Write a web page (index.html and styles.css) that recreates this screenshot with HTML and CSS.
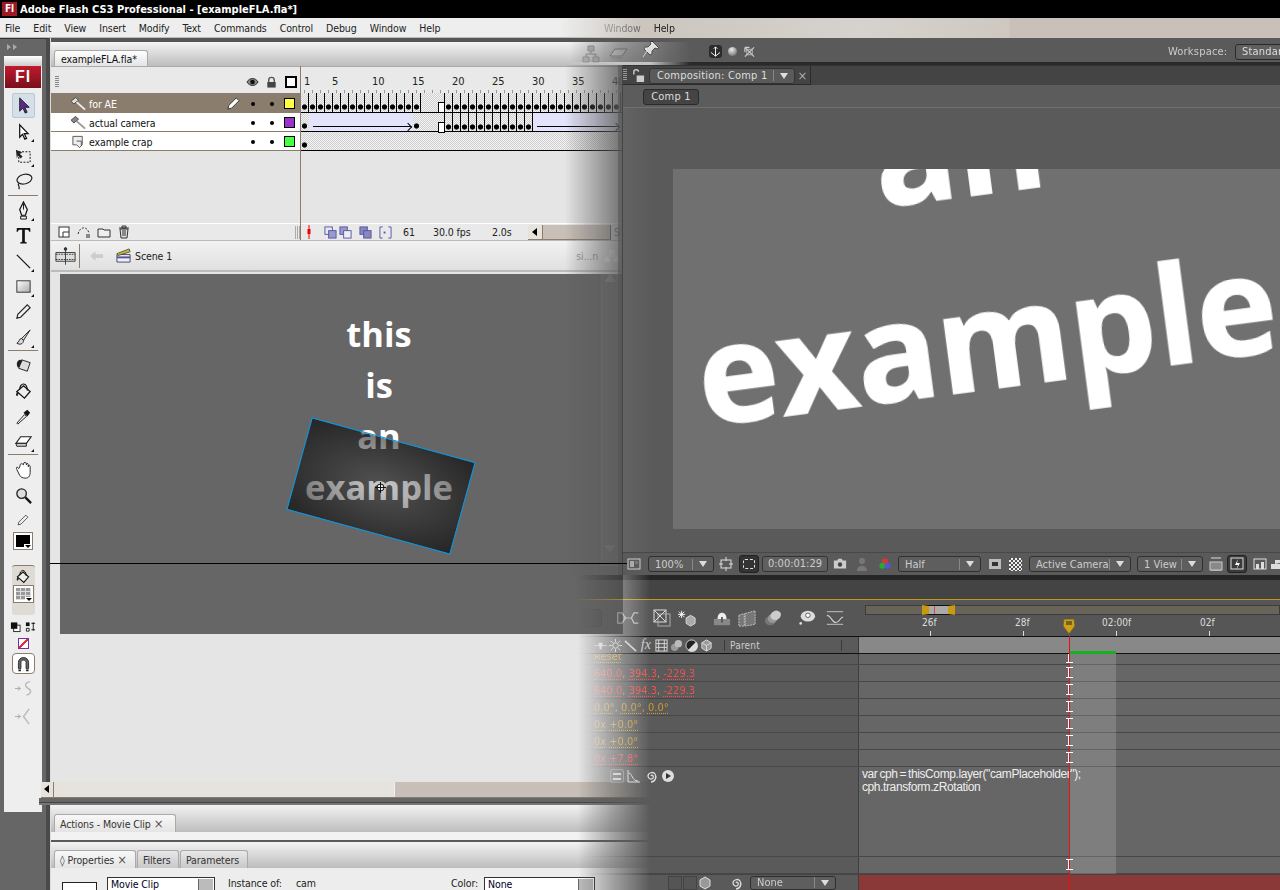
FILE: index.html
```html
<!DOCTYPE html>
<html lang="en">
<head>
    <meta charset="UTF-8">
    <title>Flash and After Effects</title>
    <link rel="stylesheet" href="styles.css">
</head>
<body>
<div class="screen">

    <!-- title bar -->
    <div class="titlebar">
        <span class="app-icon">Fl</span>
        <span class="title-text">Adobe Flash CS3 Professional - [exampleFLA.fla*]</span>
    </div>

    <!-- flash menu -->
    <div class="menubar">
        <span>File</span><span>Edit</span><span>View</span><span>Insert</span><span>Modify</span><span>Text</span><span>Commands</span><span>Control</span><span>Debug</span><span>Window</span><span>Help</span>
    </div>

    <div class="flash">
        <!-- tools column -->
        <div class="toolbox">
            <div class="toolbox-grip">
                <svg class="ic-grip" viewBox="0 0 12 8"><path d="M1 1l4 3-4 3zM7 1l4 3-4 3z" fill="#aaa"/></svg>
            </div>
            <div class="toolbox-inner">
                <div class="toolbox-cap"></div>
                <div class="fl-logo">Fl</div>
                <div class="tool tool-on"><svg viewBox="0 0 20 20"><path d="M6 2v14l3.4-3.3 2.4 5.3 2-.9-2.4-5.2H16z" fill="#5b2a86" stroke="#222"/></svg></div>
                <div class="tool"><svg viewBox="0 0 20 20"><path d="M6 3v13l3-3 2.4 5 1.8-.8-2.4-5h4z" fill="#fff" stroke="#111" stroke-width="1.3"/></svg><i class="corner"></i></div>
                <div class="tool"><svg viewBox="0 0 20 20"><rect x="5" y="5" width="12" height="11" fill="none" stroke="#111" stroke-dasharray="2 1.5"/><path d="M2 3l7 3-3 1 3 3-2 2-3-3-1 3z" fill="#222"/></svg><i class="corner"></i></div>
                <div class="tool"><svg viewBox="0 0 20 20"><ellipse cx="11" cy="7.5" rx="8" ry="5" fill="none" stroke="#222" stroke-width="1.3" transform="rotate(-14 11 7.5)"/><path d="M5 12c-2 2 2 3 0 6" fill="none" stroke="#222" stroke-width="1.3"/></svg></div>
                <div class="tool-sep"></div>
                <div class="tool"><svg viewBox="0 0 20 20"><path d="M10 1l4 8-2 6H8L6 9z" fill="#eee" stroke="#111" stroke-width="1.3"/><path d="M10 3v6M7 16h6v3H7z" fill="none" stroke="#111"/></svg><i class="corner"></i></div>
                <div class="tool"><svg viewBox="0 0 20 20"><path d="M3 2h14l.3 4H16c-.4-1.6-1-2-3-2h-1.6v12c0 .8.6 1 2 1v1.3H6.6V17c1.4 0 2-.2 2-1V4H7C5 4 4.4 4.4 4 6H2.7z" fill="#111"/></svg></div>
                <div class="tool"><svg viewBox="0 0 20 20"><path d="M3 3l14 14" stroke="#111" stroke-width="1.3"/></svg><i class="corner"></i></div>
                <div class="tool"><svg viewBox="0 0 20 20"><defs><linearGradient id="rectFill" x1="0" y1="0" x2="1" y2="1"><stop offset="0" stop-color="#fff"/><stop offset="1" stop-color="#aaa"/></linearGradient></defs><rect x="3" y="4" width="14" height="12" fill="url(#rectFill)" stroke="#333"/></svg><i class="corner"></i></div>
                <div class="tool"><svg viewBox="0 0 20 20"><path d="M14 3l3 3L7 16l-4 1 1-4z" fill="#eee" stroke="#222" stroke-width="1.2"/></svg></div>
                <div class="tool"><svg viewBox="0 0 20 20"><path d="M17 2L8 11l2 2zM8 11c-3 0-2 4-5 5 3 2 7 1 7-3z" fill="#ddd" stroke="#222"/></svg><i class="corner"></i></div>
                <div class="tool-sep"></div>
                <div class="tool"><svg viewBox="0 0 20 20"><path d="M8 4l9 3-3 9-9-3z" fill="#ddd" stroke="#222"/><path d="M4 12c-2-3-1-7 2-8l3 1-4 7z" fill="#222"/></svg></div>
                <div class="tool"><svg viewBox="0 0 20 20"><path d="M10 5l7 6-6 7-8-7z" fill="#eee" stroke="#111" stroke-width="1.3"/><path d="M6 9c0-8 8-8 8 1" fill="none" stroke="#111" stroke-width="1.2"/><path d="M3 11l-1 4 1.5 1 1.5-3" fill="#222"/></svg></div>
                <div class="tool"><svg viewBox="0 0 20 20"><path d="M3 17l8-9 2 2-9 8z" fill="#eee" stroke="#222"/><path d="M10 6l4-3 3 3-3 4z" fill="#111"/></svg></div>
                <div class="tool"><svg viewBox="0 0 20 20"><path d="M7 5h11l-5 7H2z" fill="#fff" stroke="#222" stroke-width="1.2"/><path d="M2 12h11v3H3z" fill="#ccc" stroke="#222"/></svg><i class="corner"></i></div>
                <div class="tool-sep"></div>
                <div class="tool"><svg viewBox="0 0 20 20"><path d="M5 8c-2-3-3-1-2 1l3 6c1 2 3 3 6 3 4 0 5-3 5-6V6c0-2-2-2-2 0V4c0-2-2-2-2 0V3c0-2-3-2-3 0V4C8 2 6 3 6.5 5z" fill="#fff" stroke="#222"/></svg></div>
                <div class="tool"><svg viewBox="0 0 20 20"><circle cx="8" cy="8" r="5" fill="#ddd" stroke="#222" stroke-width="1.4"/><path d="M12 12l6 6" stroke="#111" stroke-width="2.4"/></svg></div>
                <div class="tool tool-small"><svg viewBox="0 0 20 20"><path d="M14 3l3 3L7 16l-4 1 1-4z" fill="#eee" stroke="#222"/></svg></div>
                <div class="swatch-btn"><i class="swatch-black"></i></div>
                <div class="fill-group">
                    <svg viewBox="0 0 20 20"><path d="M10 5l7 6-6 7-8-7z" fill="#eee" stroke="#111" stroke-width="1.3"/><path d="M6 9c0-8 8-8 8 1" fill="none" stroke="#111" stroke-width="1.2"/><path d="M3 11l-1 4 1.5 1 1.5-3" fill="#222"/></svg>
                    <div class="swatch-btn swatch-grid"><i class="grid-cell"></i></div>
                </div>
                <div class="mini-swatches">
                    <svg viewBox="0 0 12 12"><rect x="4" y="4" width="7" height="7" fill="#fff" stroke="#222"/><rect x="1" y="1" width="7" height="7" fill="#111"/></svg>
                    <svg viewBox="0 0 12 12"><path d="M1 1h4v4H1z" fill="#111"/><path d="M1.5 7.5h3v3h-3z" fill="#fff" stroke="#111"/><path d="M7 2h4M9 1v9M7 9h4" fill="none" stroke="#111"/></svg>
                </div>
                <div class="none-swatch"></div>
                <div class="magnet-btn">
                    <svg viewBox="0 0 20 20"><path d="M4 16V9c0-8 12-8 12 0v7h-3V9c0-4-6-4-6 0v7z" fill="#666" stroke="#222"/><path d="M4 17h3v2H4zM13 17h3v2h-3z" fill="#222"/></svg>
                </div>
                <div class="tool tool-dim"><svg viewBox="0 0 20 20"><path d="M1 10h5M4 8l3 2-3 2" stroke="#aaa" fill="none"/><path d="M17 3c-6 0-6 5-2 7s3 6-2 7" fill="none" stroke="#bbb" stroke-width="1.5"/></svg></div>
                <div class="tool tool-dim"><svg viewBox="0 0 20 20"><path d="M1 10h5M4 8l3 2-3 2" stroke="#aaa" fill="none"/><path d="M16 2l-6 8 6 8" fill="none" stroke="#bbb" stroke-width="1.5"/></svg></div>
            </div>
        </div>

        <div class="flash-main">
            <!-- document tabs -->
            <div class="doc-tabs">
                <span class="doc-tab">exampleFLA.fla*</span>
                <div class="ghost-icons">
                    <svg viewBox="0 0 20 20"><path d="M7 2h6v5H7zM2 13h6v5H2zM12 13h6v5h-6zM10 7v3H5v3M10 10h5v3" fill="#bbb" stroke="#999"/></svg>
                    <svg viewBox="0 0 20 20"><path d="M6 5h12l-5 7H1z" fill="#fff" stroke="#888"/><path d="M1 12h12v3H2z" fill="#bbb"/></svg>
                </div>
            </div>

            <!-- timeline -->
            <div class="timeline">
                <div class="tl-layers">
                    <div class="tl-head">
                        <i class="grip"></i>
                        <svg class="col-ic" viewBox="0 0 14 12"><path d="M1 6c3-5 9-5 12 0-3 5-9 5-12 0z" fill="#888" stroke="#222"/><circle cx="7" cy="6" r="2.5" fill="#111"/></svg>
                        <svg class="col-ic" viewBox="0 0 14 12"><path d="M4 6V4c0-4 6-4 6 0v2" fill="none" stroke="#555" stroke-width="1.5"/><rect x="2.5" y="6" width="9" height="6" fill="#444"/></svg>
                        <i class="outline-box"></i>
                    </div>
                    <div class="layer layer-on">
                        <svg class="layer-ic" viewBox="0 0 16 14"><path d="M0 4l5-4 3 3-5 4z" fill="#ddd" stroke="#444"/><path d="M6 5l9 8" stroke="#eee" stroke-width="2"/></svg>
                        <span class="layer-name">for AE</span>
                        <svg class="pen" viewBox="0 0 14 14"><path d="M10 1l3 3-8 8-4 1 1-4z" fill="#fff" stroke="#333"/></svg>
                        <i class="bullet"></i><i class="bullet"></i>
                        <i class="color-box yellow"></i>
                    </div>
                    <div class="layer">
                        <svg class="layer-ic" viewBox="0 0 16 14"><path d="M0 4l5-4 3 3-5 4z" fill="#888" stroke="#444"/><path d="M6 5l9 8" stroke="#999" stroke-width="2"/></svg>
                        <span class="layer-name">actual camera</span>
                        <i class="bullet bullet-first"></i><i class="bullet"></i>
                        <i class="color-box purple"></i>
                    </div>
                    <div class="layer">
                        <svg class="layer-ic" viewBox="0 0 16 14"><path d="M2 1h10v9l-3 3-3-3H2z" fill="#eee" stroke="#555"/><path d="M6 6h5v5" fill="none" stroke="#555"/></svg>
                        <span class="layer-name">example crap</span>
                        <i class="bullet bullet-first"></i><i class="bullet"></i>
                        <i class="color-box green"></i>
                    </div>
                    <div class="tl-foot">
                        <svg class="foot-ic" viewBox="0 0 14 14"><rect x="2" y="2" width="10" height="10" fill="#fff" stroke="#333"/><path d="M6 12V7h6" fill="none" stroke="#333"/></svg>
                        <svg class="foot-ic" viewBox="0 0 14 14"><path d="M1 9C3 1 10 1 12 8" fill="none" stroke="#333" stroke-dasharray="2 1.5"/><rect x="9" y="9" width="4" height="4" fill="#888"/></svg>
                        <svg class="foot-ic" viewBox="0 0 14 14"><path d="M1 4h5l1 1h6v7H1z" fill="#eee" stroke="#333"/></svg>
                        <svg class="foot-ic" viewBox="0 0 14 14"><path d="M3 4h8l-1 9H4zM2 3h10M5 1h4v2H5zM6 5v6M8 5v6" fill="#ddd" stroke="#333"/></svg>
                        <i class="grip-v"></i>
                    </div>
                </div>
                <div class="tl-frames">
                    <div class="ruler">
                        <span class="ruler-one">1</span><span>5</span><span>10</span><span>15</span><span>20</span><span>25</span><span>30</span><span>35</span><span>40</span>
                    </div>
                    <div class="frow frow-first">
                        <i class="kf-run w120"></i><i class="gap w16"></i><i class="blank-kf"></i><i class="kf-run w200"></i>
                    </div>
                    <div class="frow">
                        <i class="kf-dot"></i><i class="tween w104"></i><i class="kf-dot"></i><i class="gap w16"></i><i class="blank-kf"></i><i class="kf-run w88"></i><i class="tween w88"></i><i class="kf-dot"></i><i class="tween w104"></i>
                    </div>
                    <div class="frow">
                        <i class="kf-dot"></i>
                    </div>
                    <div class="tl-foot frames-foot">
                        <svg class="head-mark" viewBox="0 0 6 14"><path d="M3 0v14" stroke="#e00"/><rect x="1.5" y="4" width="3" height="5" fill="#e00"/></svg>
                        <svg class="onion onion-1" viewBox="0 0 14 14"><rect x="1" y="1" width="8" height="8" fill="none" stroke="#55a"/><rect x="5" y="5" width="8" height="8" fill="#9999cc" stroke="#55a"/></svg>
                        <svg class="onion onion-2" viewBox="0 0 14 14"><rect x="1" y="1" width="8" height="8" fill="#9999cc" stroke="#55a"/><rect x="5" y="5" width="8" height="8" fill="#eee" stroke="#55a"/></svg>
                        <svg class="onion" viewBox="0 0 14 14"><rect x="1" y="1" width="8" height="8" fill="#8888bb" stroke="#55a"/><rect x="5" y="5" width="8" height="8" fill="#8888bb" stroke="#55a"/></svg>
                        <svg class="onion" viewBox="0 0 14 14"><path d="M4 1H1v12h3M10 1h3v12h-3" fill="none" stroke="#55a"/><rect x="5" y="6" width="2" height="2" fill="#55a"/></svg>
                        <span class="foot-num">61</span>
                        <span class="foot-fps">30.0 fps</span>
                        <span class="foot-time">2.0s</span>
                        <div class="mini-scroll"><i class="scroll-arrow"></i><i class="mini-thumb"></i></div>
                        <span class="foot-ghost">S</span>
                    </div>
                </div>
            </div>

            <!-- edit bar -->
            <div class="editbar">
                <svg class="edit-ic" viewBox="0 0 24 20"><path d="M1 6h22v10H1z" fill="#ddd" stroke="#333"/><path d="M1 8h22M1 14h22" stroke="#333" stroke-dasharray="2 1"/><path d="M12 0v20" stroke="#333"/><circle cx="12" cy="2" r="2" fill="#333"/></svg>
                <i class="edit-sep"></i>
                <svg class="edit-back" viewBox="0 0 16 12"><path d="M1 6l6-5v3h8v4H7v3z" fill="#ccc"/></svg>
                <svg class="edit-clap" viewBox="0 0 16 16"><path d="M1 7h14v8H1z" fill="#eef" stroke="#446"/><path d="M1 10h14" stroke="#558" stroke-width="2"/><path d="M1 6l13-5 1 3L2 8z" fill="#cb4" stroke="#553"/></svg>
                <span>Scene 1</span>
                <span class="edit-ghost">si...n</span>
                <svg class="edit-tree" viewBox="0 0 16 14"><path d="M5 1h6v4H5zM1 9h5v4H1zM10 9h5v4h-5z" fill="#fff"/><path d="M8 5v2H3.5v2M8 7h4.5v2" fill="none" stroke="#fff"/></svg>
            </div>

            <!-- stage -->
            <div class="workspace">
                <div class="stage">
                    <div class="stage-text">
                        <p>this</p>
                        <p>is</p>
                        <p>an</p>
                        <p>example</p>
                    </div>
                    <div class="camera"></div>
                    <svg class="crosshair" viewBox="0 0 11 11"><circle cx="5.5" cy="5.5" r="3.5" fill="#eee" stroke="#111"/><path d="M5.5 0v11M0 5.5h11" stroke="#111"/></svg>
                    <div class="stage-vscroll"><i class="arrow-up"></i><i class="arrow-down"></i></div>
                </div>
            </div>
            <div class="hscroll"><i class="scroll-arrow"></i><i class="hscroll-track"></i><i class="hscroll-thumb"></i></div>
            <div class="dark-bar"></div>

            <!-- bottom panels -->
            <div class="panel-tabs actions-tabs">
                <span class="ptab tab-actions">Actions - Movie Clip <b>×</b></span>
            </div>
            <div class="strip"></div>
            <div class="panel-tabs props-tabs">
                <span class="ptab tab-props">◊ Properties <b>×</b></span>
                <span class="ptab ptab-off tab-filters">Filters</span>
                <span class="ptab ptab-off tab-params">Parameters</span>
            </div>
            <div class="props">
                <i class="prop-icon"></i>
                <span class="prop-select sel-clip">Movie Clip</span>
                <span class="prop-label">Instance of:</span>
                <span class="prop-val">cam</span>
                <span class="prop-label color-label">Color:</span>
                <span class="prop-select sel-color">None</span>
            </div>
        </div>
    </div>

    <!-- after effects, faded in over flash from the left -->
    <div class="ae">
        <div class="ae-menu">
            <span class="ae-menu-dim">Window</span><span>Help</span>
        </div>
        <div class="ae-tools">
            <svg class="ae-pin" viewBox="0 0 20 20"><path d="M11 2l7 7-2 1-2-1-3 3 0 3-2 1-6-6 1-2 3 0 3-3-1-2z" fill="#ddd" stroke="#222"/><path d="M6 12l-4 6" stroke="#ccc"/></svg>
            <span class="axis-btn"><svg viewBox="0 0 12 12"><path d="M6 1v10M1 7l5 4 5-4M4 3l2-2 2 2" fill="none" stroke="#fff"/></svg></span>
            <i class="sphere"></i>
            <svg class="axis-ic" viewBox="0 0 12 12"><path d="M1 1l10 10M11 1L1 11M1 1h5M1 1v5" fill="none" stroke="#ccc" stroke-width="1.3"/><rect x="3" y="3" width="6" height="6" fill="none" stroke="#bbb"/></svg>
            <span class="workspace-label">Workspace:</span>
            <span class="workspace-sel">Standard</span>
        </div>
        <div class="ae-thin"></div>

        <div class="ae-middle">
            <div class="ae-gutter"></div>
            <div class="comp">
                <div class="comp-tabs">
                    <i class="grip grip-light"></i>
                    <svg class="lock-ic" viewBox="0 0 14 14"><path d="M2 6V3c0-3 5-3 5 0" fill="none" stroke="#ccc" stroke-width="1.5"/><rect x="5" y="7" width="8" height="7" fill="#ccc"/></svg>
                    <span class="comp-tab">Composition: Comp 1<i class="tab-div"></i><i class="drop"></i></span>
                    <span class="comp-close">×</span>
                    <i class="comp-tab-rest"></i>
                </div>
                <div class="comp-flow"><span class="comp-chip">Comp 1</span></div>
                <div class="viewer">
                    <div class="comp-image">
                        <span class="big-an">an</span>
                        <span class="big-example">example</span>
                    </div>
                </div>
                <div class="comp-bar">
                    <svg class="bar-ic m4" viewBox="0 0 14 14"><rect x="1" y="2" width="12" height="10" fill="none" stroke="#ccc"/><rect x="3" y="4" width="4" height="6" fill="#aaa"/><rect x="8" y="4" width="3" height="3" fill="#777"/></svg>
                    <span class="drop-sel w66 m7">100%<i class="tab-div"></i><i class="drop"></i></span>
                    <svg class="bar-ic m5" viewBox="0 0 14 14"><rect x="2" y="3" width="10" height="8" fill="none" stroke="#ddd"/><path d="M0 7h4M10 7h4M7 0v4M7 10v4" stroke="#ddd"/></svg>
                    <span class="region-btn m6"><i></i></span>
                    <span class="timecode m3">0:00:01:29</span>
                    <svg class="bar-ic m5" viewBox="0 0 16 14"><path d="M1 3h4l1-2h4l1 2h4v9H1z" fill="#ccc"/><circle cx="8" cy="7.5" r="2.5" fill="#444"/></svg>
                    <svg class="bar-ic m8" viewBox="0 0 14 14"><circle cx="7" cy="4" r="3" fill="#777"/><path d="M2 14c0-7 10-7 10 0z" fill="#777"/></svg>
                    <svg class="bar-ic m9" viewBox="0 0 16 16"><circle cx="8" cy="5" r="3.5" fill="#d33"/><circle cx="5" cy="10" r="3.5" fill="#2a3"/><circle cx="11" cy="10" r="3.5" fill="#55c"/></svg>
                    <span class="drop-sel w83 m6">Half<i class="tab-div"></i><i class="drop"></i></span>
                    <svg class="bar-ic m7" viewBox="0 0 14 14"><rect x="1" y="2" width="12" height="10" fill="#bbb"/><rect x="4" y="5" width="6" height="4" fill="#333"/></svg>
                    <i class="checker m7"></i>
                    <span class="drop-sel w102 m7">Active Camera<i class="tab-div"></i><i class="drop"></i></span>
                    <span class="drop-sel w66 m6">1 View<i class="tab-div"></i><i class="drop"></i></span>
                    <svg class="bar-ic m6" viewBox="0 0 14 14"><path d="M2 1h10M2 13h10" stroke="#ddd"/><rect x="1" y="5" width="12" height="8" fill="#888" stroke="#ccc"/></svg>
                    <span class="bolt-btn m4"><svg viewBox="0 0 14 14"><rect x="1" y="1" width="12" height="11" fill="none" stroke="#ddd"/><path d="M8 2L5 8h3l-2 5 4-7H7z" fill="#fff"/></svg></span>
                    <svg class="bar-ic m6" viewBox="0 0 14 14"><rect x="1" y="2" width="12" height="10" fill="none" stroke="#ddd"/><path d="M3 12V7h3v5M8 12V5h3v7" fill="#ddd"/></svg>
                    <svg class="bar-ic m2" viewBox="0 0 14 14"><path d="M2 12h10V7H2zM6 7V3h5v3" fill="#ddd"/></svg>
                </div>
            </div>
        </div>

        <div class="ae-sep">
            <i class="ae-sep-dark"></i>
            <i class="ae-sep-head"></i>
        </div>

        <div class="tl">
            <div class="tl-top">
                <div class="tl-tools">
                    <i class="tl-search"></i>
                    <svg class="tt-ic tt-wide" viewBox="0 0 28 18"><path d="M2 3h5l4 6-4 6H2zM26 3h-5l-3 6 3 6h5" fill="none" stroke="#bbb" stroke-width="1.5"/><path d="M8 9h10" stroke="#bbb"/></svg>
                    <svg class="tt-ic t13" viewBox="0 0 18 18"><rect x="1" y="1" width="12" height="12" fill="none" stroke="#ddd"/><rect x="5" y="5" width="12" height="12" fill="none" stroke="#aaa"/><path d="M1 1l12 12M13 1L1 13" stroke="#ddd"/></svg>
                    <svg class="tt-ic t7" viewBox="0 0 20 18"><path d="M9 9l5-3 5 3v6l-5 3-5-3z" fill="#aaa" stroke="#ddd"/><path d="M4 1v8M0 5h8M1 2l6 6M7 2L1 8" stroke="#fff"/></svg>
                    <svg class="tt-ic t17" viewBox="0 0 20 18"><path d="M1 10h18v7H1z" fill="#888"/><path d="M5 10c0-9 10-9 10 0" fill="#eee"/><path d="M9 8h2v6H9z" fill="#555"/></svg>
                    <svg class="tt-ic t7" viewBox="0 0 20 18"><path d="M1 6l6-2v14H1zM8 4l11-3v15l-11 2z" fill="#777" stroke="#ccc" stroke-dasharray="2 1"/></svg>
                    <svg class="tt-ic t8" viewBox="0 0 20 18"><ellipse cx="7" cy="12" rx="6" ry="5" fill="#777"/><ellipse cx="10" cy="9" rx="6" ry="5" fill="#999" transform="rotate(-30 10 9)"/><ellipse cx="13" cy="6" rx="6" ry="5" fill="#ccc" transform="rotate(-30 13 6)"/></svg>
                    <svg class="tt-ic t16" viewBox="0 0 20 18"><ellipse cx="11" cy="7" rx="8" ry="6" fill="#ddd"/><circle cx="11" cy="6" r="2.5" fill="#fff" stroke="#555"/><circle cx="3" cy="15" r="1.5" fill="#ddd"/></svg>
                    <svg class="tt-ic t10" viewBox="0 0 20 18"><path d="M1 2h18M1 16h18" stroke="#ccc"/><path d="M1 6c5 0 5 8 10 8s4-6 8-6" fill="none" stroke="#ccc" stroke-width="1.3"/></svg>
                </div>
                <div class="tl-nav">
                    <div class="nav-bar"><i class="nav-handle"><b></b></i></div>
                    <div class="nav-ruler">
                        <span class="rl">26f</span><span class="rl">28f</span><span class="rl rl-long">02:00f</span><span class="rl">02f</span>
                        <svg class="playhead" viewBox="0 0 12 15"><path d="M1 0h10l1 7-6 8-6-8z" fill="#d0a010" stroke="#664"/><path d="M4 2v4M6 2v4M8 2v4" stroke="#222"/></svg>
                    </div>
                </div>
            </div>
            <div class="tl-cols">
                <div class="col-left">
                    <svg class="cc" viewBox="0 0 14 10"><path d="M0 5h14" stroke="#bbb"/><path d="M5 2h4v4H8v3H6V6H5z" fill="#ddd"/></svg>
                    <svg class="cc" viewBox="0 0 14 14"><circle cx="7" cy="7" r="3" fill="none" stroke="#ddd"/><path d="M7 0v3M7 11v3M0 7h3M11 7h3M2 2l2 2M10 10l2 2M12 2l-2 2M2 12l2-2" stroke="#ddd"/></svg>
                    <svg class="cc" viewBox="0 0 14 14"><path d="M1 2l12 11" stroke="#ccc" stroke-width="2"/></svg>
                    <span class="cc-fx">fx</span>
                    <svg class="cc" viewBox="0 0 14 14"><rect x="1" y="1" width="12" height="12" fill="none" stroke="#ddd"/><path d="M4 1v12M10 1v12M1 5h12M1 9h12" stroke="#ddd"/></svg>
                    <svg class="cc" viewBox="0 0 14 14"><ellipse cx="5" cy="9" rx="4" ry="4" fill="#999"/><ellipse cx="9" cy="5" rx="4" ry="4" fill="#bbb"/></svg>
                    <svg class="cc" viewBox="0 0 14 14"><circle cx="7" cy="7" r="6" fill="#222" stroke="#ddd"/><path d="M12 3A6 6 0 0 1 3 12z" fill="#ddd"/></svg>
                    <svg class="cc" viewBox="0 0 14 14"><path d="M7 1l5 3v6l-5 3-5-3V4z" fill="#999" stroke="#ddd"/><path d="M2 4l5 3 5-3M7 7v6" fill="none" stroke="#ddd"/></svg>
                    <span class="parent">Parent</span>
                </div>
                <div class="col-right"></div>
            </div>
            <div class="tl-rows">
                <div class="row row-reset">
                    <div class="row-left"><u class="amber">Reset</u></div>
                    <div class="row-right"><i class="beam"></i></div>
                </div>
                <div class="row">
                    <div class="row-left"><u class="red">640.0</u><span class="amber">, </span><u class="red">394.3</u><span class="amber">, </span><u class="red">-229.3</u></div>
                    <div class="row-right"><i class="beam"></i></div>
                </div>
                <div class="row">
                    <div class="row-left"><u class="red">640.0</u><span class="amber">, </span><u class="red">394.3</u><span class="amber">, </span><u class="red">-229.3</u></div>
                    <div class="row-right"><i class="beam"></i></div>
                </div>
                <div class="row">
                    <div class="row-left"><u class="amber">0.0°</u><span class="amber">, </span><u class="amber">0.0°</u><span class="amber">, </span><u class="amber">0.0°</u></div>
                    <div class="row-right"><i class="beam"></i></div>
                </div>
                <div class="row">
                    <div class="row-left"><u class="amber">0x</u> <u class="amber">+0.0°</u></div>
                    <div class="row-right"><i class="beam"></i></div>
                </div>
                <div class="row">
                    <div class="row-left"><u class="amber">0x</u> <u class="amber">+0.0°</u></div>
                    <div class="row-right"><i class="beam"></i></div>
                </div>
                <div class="row">
                    <div class="row-left"><u class="red">0x</u> <u class="red">+7.8°</u></div>
                    <div class="row-right"><i class="beam"></i></div>
                </div>
                <div class="row row-expr">
                    <div class="row-left expr-icons">
                        <span class="eq-btn"></span>
                        <svg class="ex-ic" viewBox="0 0 14 14"><path d="M1 1v12h12M2 4c3 0 3 8 9 8" fill="none" stroke="#ddd"/></svg>
                        <svg class="ex-ic" viewBox="0 0 14 14"><path d="M7 7c1-2 3 0 2 2s-5 1-5-2 5-5 7-2 0 8-4 8" fill="none" stroke="#ddd" stroke-width="1.3"/></svg>
                        <svg class="ex-ic" viewBox="0 0 14 14"><circle cx="7" cy="7" r="6" fill="#ddd"/><path d="M5 4l5 3-5 3z" fill="#333"/></svg>
                    </div>
                    <div class="row-right expr-text">
                        <p>var cph = thisComp.layer("camPlaceholder");</p>
                        <p>cph.transform.zRotation</p>
                    </div>
                </div>
                <div class="row">
                    <div class="row-left"></div>
                    <div class="row-right"><i class="beam"></i></div>
                </div>
                <div class="row row-last">
                    <div class="row-left last-left">
                        <i class="sw"></i><i class="sw"></i>
                        <svg class="ex-ic" viewBox="0 0 14 14"><path d="M7 1l5 3v6l-5 3-5-3V4z" fill="#999" stroke="#ddd"/></svg>
                        <svg class="ex-ic spiral" viewBox="0 0 14 14"><path d="M7 7c1-2 3 0 2 2s-5 1-5-2 5-5 7-2 0 8-4 8" fill="none" stroke="#ddd" stroke-width="1.3"/></svg>
                        <span class="drop-sel none-sel">None<i class="tab-div"></i><i class="drop"></i></span>
                    </div>
                    <div class="row-right last-right"></div>
                </div>
                <div class="time-col"></div>
                <div class="green-bar"></div>
                <div class="time-line"></div>
            </div>
        </div>
    </div>

    <!-- guide line crosses both windows -->
    <div class="guide"></div>
</div>
</body>
</html>
```

FILE: styles.css
```css
* {
    box-sizing: border-box;
}

html, body {
    margin: 0;
    padding: 0;
    background: #000;
}

.screen {
    position: relative;
    width: 1280px;
    height: 890px;
    overflow: hidden;
    font-family: "DejaVu Sans Condensed", "DejaVu Sans", sans-serif;
    font-stretch: condensed;
    font-size: 10.5px;
    letter-spacing: -0.1px;
    color: #222;
    background: #e5e5e5;
}

svg {
    display: block;
    flex: none;
}

i, b {
    font-style: normal;
    display: block;
    flex: none;
}

p {
    margin: 0;
}

/* title + menu */
.titlebar {
    height: 18px;
    background: #000;
    color: #fff;
    display: flex;
    align-items: center;
    font-weight: bold;
    font-size: 11px;
    letter-spacing: 0;
}

.app-icon {
    width: 15px;
    height: 14px;
    margin: 0 3px 0 2px;
    background: #a01824;
    color: #fff;
    font-size: 10px;
    text-align: center;
    line-height: 14px;
}

.menubar {
    height: 20px;
    display: flex;
    align-items: center;
    gap: 13px;
    padding-left: 5px;
    background: #eeeeee;
    border-bottom: 1px solid #bbb;
}

/* flash body */
.flash {
    display: flex;
    height: 852px;
}

.toolbox {
    width: 50px;
    flex: none;
    background: #666;
    border-right: 4px solid #4a4a4a;
    border-top: 1px solid #333;
}

.toolbox-grip {
    height: 17px;
    padding: 4px 0 0 6px;
}

.ic-grip {
    width: 12px;
    height: 8px;
}

.toolbox-inner {
    width: 38px;
    height: 756px;
    margin-left: 4px;
    background: #eeeeee;
    display: flex;
    flex-direction: column;
    align-items: center;
}

.toolbox-cap {
    width: 100%;
    height: 10px;
    background: linear-gradient(#fff, #ccc);
}

.fl-logo {
    width: 36px;
    height: 22px;
    margin-bottom: 5px;
    background: linear-gradient(#c11a2c, #78101c);
    color: #fff;
    font-family: "Liberation Sans", sans-serif;
    font-weight: bold;
    font-size: 16px;
    line-height: 22px;
    text-align: center;
    letter-spacing: 1px;
}

.tool {
    position: relative;
    width: 23px;
    height: 25.4px;
    display: flex;
    align-items: center;
    justify-content: center;
}

.tool svg {
    width: 19px;
    height: 19px;
}

.tool-on {
    background: #d5dfe8;
    border: 1px solid #b8c8d4;
    border-radius: 2px;
}

.corner {
    position: absolute;
    right: 1px;
    bottom: 2px;
    border-left: 3px solid transparent;
    border-bottom: 3px solid #111;
}

.tool-sep {
    width: 30px;
    height: 1px;
    margin: 0 0 2px;
    background: #8a7d6d;
}

.tool-small {
    height: 24px;
}

.tool-small svg {
    width: 14px;
    height: 14px;
}

.swatch-btn {
    width: 20px;
    height: 18px;
    padding: 2px;
    background: #fff;
    border: 1px solid #8a7d6d;
    position: relative;
}

.swatch-btn::after {
    content: "";
    position: absolute;
    right: 0;
    bottom: 0;
    width: 8px;
    height: 5px;
    background: #fff;
}

.swatch-btn::before {
    content: "";
    position: absolute;
    z-index: 1;
    right: 1px;
    bottom: 1px;
    border-left: 3px solid transparent;
    border-right: 3px solid transparent;
    border-top: 3px solid #000;
}

.swatch-black {
    height: 100%;
    background: #000;
}

.fill-group {
    width: 23px;
    height: 50px;
    margin-top: 15px;
    padding-top: 2px;
    background: #dedad4;
    border-top: 1px solid #8a7d6d;
    border-radius: 3px;
    display: flex;
    flex-direction: column;
    align-items: center;
}

.fill-group svg {
    width: 16px;
    height: 16px;
}

.swatch-grid {
    margin-top: 1px;
    width: 21px;
}

.grid-cell {
    height: 100%;
    background:
        repeating-linear-gradient(90deg, transparent 0 4px, #ddd 4px 5px),
        repeating-linear-gradient(transparent 0 3px, #ddd 3px 4px),
        #999;
}

.mini-swatches {
    width: 28px;
    margin-top: 6px;
    display: flex;
    justify-content: center;
    gap: 4px;
}

.mini-swatches svg {
    width: 11px;
    height: 12px;
}

.none-swatch {
    width: 11px;
    height: 11px;
    margin-top: 5px;
    border: 1px solid #7a2fa0;
    background: linear-gradient(135deg, #fff 43%, #e03040 43% 57%, #fff 57%);
}

.magnet-btn {
    width: 23px;
    height: 21px;
    margin-top: 4px;
    padding: 1px 2px;
    background: #fff;
    border: 1px solid #8a7d6d;
    border-radius: 4px;
}

.magnet-btn svg {
    width: 17px;
    height: 17px;
}

.tool-dim {
    height: 28px;
}

.flash-main {
    flex: 1;
    display: flex;
    flex-direction: column;
    min-width: 0;
    background: #e5e5e5;
    border-left: 1px solid #ddd;
}

/* document tabs */
.doc-tabs {
    height: 28px;
    padding: 12px 0 0 3px;
    background: linear-gradient(#f4f4f4, #bdbdbd);
    border-top: 4px solid #555;
    display: flex;
    align-items: flex-end;
}

.doc-tab {
    width: 94px;
    height: 16px;
    padding-left: 6px;
    line-height: 16px;
    background: linear-gradient(#fff, #e4e4e4);
    border: 1px solid #aaa;
    border-bottom: 0;
    border-radius: 3px 3px 0 0;
    color: #111;
}

.ghost-icons {
    display: flex;
    margin-left: 433px;
    margin-bottom: 2px;
    gap: 8px;
}

.ghost-icons svg {
    width: 20px;
    height: 20px;
}

/* flash timeline */
.timeline {
    height: 175px;
    display: flex;
    border-bottom: 1px solid #bbb;
}

.tl-layers {
    width: 250px;
    flex: none;
    display: flex;
    flex-direction: column;
    border-right: 1px solid #8a7d6d;
}

.tl-head {
    height: 27px;
    display: flex;
    align-items: center;
    padding-top: 3px;
    background: #e9e9e9;
    border-top: 1px solid #aaa;
}

.grip {
    width: 4px;
    height: 12px;
    margin-left: 4px;
    background: repeating-linear-gradient(#888 0 1px, transparent 1px 2px);
}

.col-ic {
    width: 13px;
    height: 12px;
    margin-left: 6px;
}

.col-ic:nth-of-type(1) {
    margin-left: 187px;
}

.outline-box {
    width: 12px;
    height: 12px;
    margin-left: 7px;
    background: #fff;
    border: 2px solid #000;
}

.layer {
    height: 19px;
    display: flex;
    align-items: center;
    padding-top: 1px;
    background: #fff;
    border-bottom: 1px solid #8a7d6d;
    color: #111;
}

.layer-on {
    height: 20px;
    background: #8a7d6d;
    color: #fff;
    border-bottom: 0;
}

.layer-ic {
    width: 15px;
    height: 14px;
    margin-left: 20px;
}

.layer-name {
    width: 136px;
    margin-left: 3px;
}

.pen {
    width: 13px;
    height: 13px;
    margin-left: 2px;
    margin-right: 11px;
}

.bullet {
    width: 4px;
    height: 4px;
    margin-right: 15px;
    border-radius: 50%;
    background: #000;
}

.bullet-first {
    margin-left: 26px;
}

.color-box {
    width: 11px;
    height: 11px;
    margin-left: -5px;
    border: 1px solid #000;
}

.yellow { background: #ffff44; }
.purple { background: #9933cc; }
.green { background: #44ff44; }

.tl-foot {
    margin-top: auto;
    height: 17px;
    display: flex;
    align-items: center;
    background: #e9e9e9;
    border-top: 1px solid #fff;
    padding-left: 6px;
    gap: 6px;
}

.foot-ic {
    width: 14px;
    height: 14px;
}

.grip-v {
    width: 7px;
    height: 13px;
    margin-left: 158px;
    background: repeating-linear-gradient(90deg, #aaa 0 1px, transparent 1px 2px);
}

.tl-frames {
    flex: 1;
    min-width: 0;
    display: flex;
    flex-direction: column;
    overflow: hidden;
}

.ruler {
    height: 27px;
    display: flex;
    padding-top: 8px;
    color: #222;
    font-size: 11px;
    letter-spacing: 0;
    background: linear-gradient(90deg, #999 1px, transparent 1px) 3px 23px / 8px 4px repeat-x, #e9e9e9;
    border-top: 1px solid #aaa;
}

.ruler span {
    width: 40px;
    flex: none;
}

.ruler .ruler-one {
    width: 31px;
    padding-left: 3px;
}

.frow {
    height: 19px;
    display: flex;
    background: conic-gradient(#cfcfcf 25%, #f4f4f4 0 50%, #cfcfcf 0 75%, #f4f4f4 0) 0 0 / 2px 2px;
    border-bottom: 1px solid #000;
}

.frow-first {
    height: 20px;
}

.kf-run {
    height: 100%;
    background:
        radial-gradient(circle at 3.5px 14px, #000 2.2px, transparent 3px) 0 0 / 8px 100%,
        linear-gradient(90deg, transparent 7px, #000 7px) 0 0 / 8px 100%;
}

.w120 { width: 120px; }
.w200 { width: 200px; }
.w88 { width: 88px; }
.w104 { width: 104px; }
.w16 { width: 16px; }

.kf-dot {
    width: 8px;
    height: 100%;
    background: radial-gradient(circle at 3.5px 13px, #000 2.2px, transparent 3px);
}

.gap {
    height: 100%;
}

.blank-kf {
    width: 8px;
    height: 100%;
    position: relative;
    border-right: 1px solid #000;
}

.blank-kf::after {
    content: "";
    position: absolute;
    left: 1px;
    top: 9px;
    width: 5px;
    height: 9px;
    background: #fff;
    border: 1px solid #000;
}

.tween {
    position: relative;
    height: 100%;
    background: #e3e3fb;
}

.tween::before {
    content: "";
    position: absolute;
    left: 4px;
    right: 2px;
    top: 13px;
    height: 1px;
    background: #000;
}

.tween::after {
    content: "";
    position: absolute;
    right: 2px;
    top: 11px;
    width: 5px;
    height: 5px;
    border-top: 1px solid #000;
    border-right: 1px solid #000;
    transform: rotate(45deg);
}

.frames-foot {
    padding-left: 5px;
    gap: 0;
    overflow: hidden;
}

.head-mark {
    width: 6px;
    height: 14px;
}

.onion {
    width: 13px;
    height: 13px;
    margin-left: 7px;
}

.onion-1 {
    margin-left: 12px;
}

.onion-2 {
    margin-left: 2px;
}

.foot-num {
    width: 30px;
    margin-left: 11px;
    flex: none;
}

.foot-fps {
    width: 59px;
    flex: none;
}

.foot-time {
    width: 36px;
    flex: none;
}

.mini-scroll {
    width: 83px;
    height: 15px;
    flex: none;
    display: flex;
    background: #c8c0b8;
    border-bottom: 1px solid #8a7d6d;
    border-right: 1px solid #555;
}

.foot-ghost {
    margin-left: 3px;
    color: #778;
}

.scroll-arrow {
    position: relative;
    width: 15px;
    height: 100%;
    background: #e6e2dc;
    border-right: 1px solid #8a7d6d;
}

.scroll-arrow::after {
    content: "";
    position: absolute;
    left: 4px;
    top: 3px;
    border-style: solid;
    border-width: 4px 5px 4px 0;
    border-color: transparent #000 transparent transparent;
}

.mini-thumb {
    flex: 1;
}

/* edit bar */
.editbar {
    height: 31px;
    display: flex;
    align-items: center;
    background: linear-gradient(#f2f2f2, #e0e0e0);
    border-bottom: 2px solid #bbb;
    padding-left: 4px;
}

.edit-ic {
    width: 21px;
    height: 20px;
}

.edit-sep {
    width: 1px;
    height: 24px;
    margin: 0 9px 0 3px;
    background: #8a7d6d;
}

.edit-back {
    width: 15px;
    height: 12px;
}

.edit-clap {
    width: 15px;
    height: 15px;
    margin: 0 4px 0 12px;
}

.edit-ghost {
    width: 25px;
    margin-left: 404px;
    color: #999;
}

.edit-tree {
    width: 16px;
    height: 14px;
    margin-left: 3px;
}

/* stage */
.workspace {
    height: 510px;
    padding: 2px 0 0 9px;
    background: #e5e5e5;
}

.stage {
    position: relative;
    width: 563px;
    height: 360px;
    background: #666;
}

/* wider than the visible pasteboard so the lines centre on x=379 */
.stage-text {
    width: 638px;
    padding-top: 34px;
    text-align: center;
    color: #fff;
    font-family: "Open Sans", sans-serif;
    font-stretch: normal;
    font-weight: bold;
    font-size: 34.5px;
    line-height: 51px;
    letter-spacing: 0;
}

.camera {
    position: absolute;
    left: 236px;
    top: 164px;
    width: 170px;
    height: 96px;
    transform: rotate(15.4deg);
    border: 1.5px solid #0099e6;
    background: radial-gradient(ellipse at center, rgba(0, 0, 0, 0.2), rgba(0, 0, 0, 0.64));
}

.crosshair {
    position: absolute;
    left: 315px;
    top: 208px;
    width: 11px;
    height: 11px;
}

.stage-vscroll {
    position: absolute;
    right: 4px;
    top: 0;
    width: 18px;
    height: 292px;
    background: #6c6c6c;
    border: 1px solid #777;
}

.arrow-up {
    margin: -1px 0 0 2px;
    border-left: 6px solid transparent;
    border-right: 6px solid transparent;
    border-bottom: 8px solid #888;
    width: 0;
}

.arrow-down {
    margin: 263px 0 0 2px;
    border-left: 6px solid transparent;
    border-right: 6px solid transparent;
    border-top: 8px solid #808080;
    width: 0;
}

.hscroll {
    height: 16px;
    display: flex;
    background: #c8c0b8;
    margin-left: -10px;
    border-bottom: 1px solid #8a7d6d;
}

.hscroll .scroll-arrow {
    width: 13px;
}

.hscroll .scroll-arrow::after {
    left: 3px;
}

.hscroll-track {
    width: 340px;
    background: #e6e2dc;
}

.hscroll-thumb {
    flex: 1;
    border-left: 1px solid #efefef;
}

.dark-bar {
    height: 7px;
    margin-left: -12px;
    background: linear-gradient(#666 4px, #444 4px 5px, #777 5px);
}

/* bottom panels */
.panel-tabs {
    display: flex;
    align-items: flex-end;
    padding-left: 3px;
    gap: 1px;
    background: linear-gradient(#f2f2f2, #bdbdbd);
}

.actions-tabs {
    height: 27px;
}

.props-tabs {
    height: 26px;
}

.strip {
    height: 10px;
    background: linear-gradient(#f2f2f2 8px, #5a5a5a 8px);
}

.ptab {
    height: 18px;
    padding: 0 5px;
    line-height: 18px;
    background: linear-gradient(#f8f8f8, #e4e4e4);
    border: 1px solid #aaa;
    border-bottom: 0;
    border-radius: 3px 3px 0 0;
    color: #333;
    white-space: nowrap;
    display: flex;
    gap: 3px;
}

.ptab b {
    font-weight: normal;
    color: #555;
    font-size: 13px;
}

.ptab-off {
    background: linear-gradient(#e8e8e8, #c8c8c8);
}

.tab-actions { width: 122px; }
.tab-props { width: 82px; }
.tab-filters { width: 42px; }
.tab-params { width: 68px; }

.props {
    flex: 1;
    display: flex;
    align-items: flex-start;
    padding: 9px 0 0 11px;
    background: #ededed;
    overflow: hidden;
}

.prop-icon {
    width: 35px;
    height: 9px;
    margin: 5px 10px 0 0;
    border: 1px solid #222;
    border-bottom: 0;
    background: #fff;
}

.prop-select {
    position: relative;
    flex: none;
    height: 13px;
    padding-left: 3px;
    line-height: 13px;
    background: #fff;
    border: 1px solid #333;
    border-bottom: 0;
    color: #002;
}

.prop-select::after {
    content: "";
    position: absolute;
    right: 1px;
    top: 1px;
    width: 14px;
    height: 12px;
    background: #bbb;
    border-left: 1px solid #666;
}

.sel-clip { width: 108px; }
.sel-color { width: 111px; }

.prop-label {
    flex: none;
    width: 60px;
    margin-left: 13px;
    line-height: 13px;
}

.prop-val {
    flex: none;
    width: 135px;
    margin-left: 8px;
    line-height: 13px;
}

.color-label {
    width: 30px;
    margin-left: 20px;
    margin-right: 3px;
}

/* after effects layer */
.ae {
    position: absolute;
    left: 0;
    top: 18px;
    width: 1280px;
    height: 872px;
    display: flex;
    flex-direction: column;
    color: #ccc;
    font-size: 11px;
    letter-spacing: 0.2px;
}

.ae-menu {
    height: 20px;
    display: flex;
    align-items: center;
    gap: 13px;
    padding-left: 604px;
    color: #222;
    font-size: 10.5px;
    letter-spacing: -0.1px;
    background: linear-gradient(90deg, #cbc5be 640px, #d6d2cd 860px, #cec8c1 1009px, #c9c1b9 1010px);
    -webkit-mask-image: linear-gradient(90deg, transparent 560px, #000 640px);
    mask-image: linear-gradient(90deg, transparent 560px, #000 640px);
}

.ae-menu-dim {
    color: #666;
}

.ae-tools {
    height: 24px;
    display: flex;
    align-items: center;
    padding: 3px 0 0 641px;
    background: #5a5a5a;
    -webkit-mask-image: linear-gradient(90deg, transparent 570px, rgba(0, 0, 0, 0.6) 620px, #000 690px);
    mask-image: linear-gradient(90deg, transparent 570px, rgba(0, 0, 0, 0.6) 620px, #000 690px);
}

.ae-pin {
    width: 20px;
    height: 20px;
    margin-top: -5px;
}

.axis-btn {
    width: 13px;
    height: 13px;
    margin-left: 48px;
    padding: 1px;
    background: #2b2b2b;
    border-radius: 3px;
}

.axis-btn svg {
    width: 11px;
    height: 11px;
}

.sphere {
    width: 9px;
    height: 9px;
    margin-left: 6px;
    border-radius: 50%;
    background: radial-gradient(circle at 40% 30%, #eee, #555);
}

.axis-ic {
    width: 11px;
    height: 12px;
    margin-left: 7px;
}

.workspace-label {
    width: 60px;
    flex: none;
    margin-left: 413px;
    color: #ccc;
}

.workspace-sel {
    width: 60px;
    height: 16px;
    margin-left: 7px;
    padding-left: 6px;
    line-height: 14px;
    border: 1px solid #2a2a2a;
    border-radius: 3px;
    background: #5f5f5f;
    color: #ddd;
    flex: none;
    overflow: hidden;
}

.ae-thin {
    height: 3px;
    background: #2a2a2a;
    -webkit-mask-image: linear-gradient(90deg, transparent 650px, #000 690px);
    mask-image: linear-gradient(90deg, transparent 650px, #000 690px);
}

.ae-middle {
    height: 510px;
    display: flex;
}

.ae-gutter {
    width: 622px;
    flex: none;
    background: #5a5a5a;
    -webkit-mask-image: linear-gradient(90deg, transparent 565px, rgba(0, 0, 0, 0.82) 622px);
    mask-image: linear-gradient(90deg, transparent 565px, rgba(0, 0, 0, 0.82) 622px);
}

.comp {
    flex: 1;
    min-width: 0;
    display: flex;
    flex-direction: column;
    border-left: 1px solid #444;
    background: linear-gradient(90deg, #636363, #5a5a5a 30px);
    box-shadow: -4px 0 0 rgba(55, 55, 55, 0.55);
}

.comp-tabs {
    height: 20px;
    display: flex;
    align-items: center;
    background: #444;
    border-bottom: 1px solid #2a2a2a;
    border-top: 1px solid #333;
}

.grip-light {
    margin-left: 0;
    background: repeating-linear-gradient(#999 0 1px, transparent 1px 2px);
}

.lock-ic {
    width: 13px;
    height: 13px;
    margin-left: 5px;
}

.comp-tab {
    display: flex;
    align-items: center;
    width: 146px;
    height: 16px;
    margin: 1px 0 0 4px;
    padding-left: 7px;
    flex: none;
    background: #5a5a5a;
    border: 1px solid #333;
    border-radius: 3px;
    color: #ddd;
}

.comp-close {
    width: 15px;
    text-align: center;
    color: #aaa;
    font-size: 13px;
}

.comp-tab-rest {
    flex: 1;
    height: 19px;
    margin-left: 0;
    border-left: 1px solid #2a2a2a;
    background: #444;
}

.tab-div {
    width: 1px;
    height: 11px;
    margin-left: auto;
    background: #888;
}

.drop {
    width: 0;
    height: 0;
    margin: 0 6px;
    border-left: 4px solid transparent;
    border-right: 4px solid transparent;
    border-top: 6px solid #ddd;
}

.comp-flow {
    height: 23px;
    padding: 4px 0 0 20px;
    background: #5c5c5c;
    border-bottom: 1px solid #707070;
}

.comp-chip {
    display: block;
    width: 56px;
    height: 16px;
    line-height: 14px;
    text-align: center;
    background: #444;
    border: 1px solid #2a2a2a;
    border-radius: 3px;
    color: #ddd;
}

.viewer {
    flex: 1;
    padding: 61px 0 0 50px;
}

.comp-image {
    position: relative;
    height: 360px;
    overflow: hidden;
    background: #707070;
}

.big-example,
.big-an {
    position: absolute;
    font-family: "Open Sans", sans-serif;
    font-stretch: normal;
    font-weight: bold;
    color: #fff;
    font-size: 136px;
    line-height: 136px;
    letter-spacing: 0;
    -webkit-text-stroke: 1.5px #fff;
    transform: rotate(-7.5deg);
    filter: blur(0.7px);
    white-space: nowrap;
}

.big-example {
    left: 22px;
    top: 100px;
}

.big-an {
    left: 199px;
    top: -92px;
}

.comp-bar {
    height: 23px;
    display: flex;
    align-items: center;
    letter-spacing: 0;
    background: #5a5a5a;
    border-top: 1px solid #484848;
}

.bar-ic {
    width: 14px;
    height: 14px;
}

.m2 { margin-left: 2px; }
.m3 { margin-left: 3px; }
.m4 { margin-left: 4px; }
.m5 { margin-left: 5px; }
.m6 { margin-left: 6px; }
.m7 { margin-left: 7px; }
.m8 { margin-left: 8px; }
.m9 { margin-left: 9px; }

.drop-sel {
    display: flex;
    align-items: center;
    height: 16px;
    padding-left: 6px;
    flex: none;
    white-space: nowrap;
    border: 1px solid #2f2f2f;
    border-radius: 3px;
    background: #5e5e5e;
    color: #ccc;
}

.w66 { width: 66px; }
.w83 { width: 83px; }
.w102 { width: 102px; }

.region-btn {
    width: 20px;
    height: 18px;
    flex: none;
    padding: 3px;
    background: #333;
    border-radius: 3px;
    border: 1px solid #222;
}

.region-btn i {
    height: 100%;
    border: 1px dashed #ddd;
    border-radius: 2px;
}

.timecode {
    width: 66px;
    height: 16px;
    flex: none;
    line-height: 14px;
    text-align: center;
    border: 1px solid #333;
    border-radius: 3px;
    background: #606060;
    color: #ccc;
}

.checker {
    width: 13px;
    height: 13px;
    background: conic-gradient(#eee 25%, #555 0 50%, #eee 0 75%, #555 0) 0 0 / 4px 4px;
}

.bolt-btn {
    width: 20px;
    height: 18px;
    flex: none;
    padding: 1px 2px;
    background: #3a3a3a;
    border: 1px solid #222;
    border-radius: 3px;
}

.bolt-btn svg {
    width: 14px;
    height: 14px;
}

.ae-sep {
    height: 25px;
    display: flex;
    flex-direction: column;
    -webkit-mask-image: linear-gradient(90deg, transparent 575px, #000 650px);
    mask-image: linear-gradient(90deg, transparent 575px, #000 650px);
}

.ae-sep-dark {
    height: 5px;
    background: #262626;
}

.ae-sep-head {
    height: 20px;
    background: #444;
    border-bottom: 1px solid #c49a1c;
}

/* ae timeline */
.tl {
    flex: 1;
    display: flex;
    flex-direction: column;
    -webkit-mask-image: linear-gradient(90deg, transparent 578px, rgba(0, 0, 0, 0.5) 612px, #000 650px);
    mask-image: linear-gradient(90deg, transparent 578px, rgba(0, 0, 0, 0.5) 612px, #000 650px);
}

.tl-top {
    height: 36px;
    display: flex;
    background: #565656;
}

.tl-tools {
    width: 859px;
    flex: none;
    display: flex;
    align-items: center;
    padding: 0 0 0 540px;
}

.tl-search {
    width: 62px;
    height: 18px;
    margin-right: 14px;
    background: #4a4a4a;
    border: 1px solid #3c3c3c;
    border-radius: 3px;
}

.tt-ic {
    width: 18px;
    height: 18px;
}

.tt-wide { width: 24px; }
.t7 { margin-left: 7px; }
.t8 { margin-left: 8px; }
.t10 { margin-left: 10px; }
.t13 { margin-left: 13px; }
.t16 { margin-left: 16px; }
.t17 { margin-left: 17px; }

.tl-nav {
    flex: 1;
    min-width: 0;
}

.nav-bar {
    height: 10px;
    margin: 5px 0 0 6px;
    background: #68645a;
    border: 1px solid #3c3c3c;
}

.nav-handle {
    width: 33px;
    height: 10px;
    margin: -1px 0 0 56px;
    background: #aaa;
    border: 1px solid #111;
    border-left: 7px solid #c89a10;
    border-right: 7px solid #c89a10;
}

.nav-handle b {
    width: 1px;
    height: 8px;
    margin-left: 5px;
    background: #d44;
}

.nav-ruler {
    position: relative;
    height: 21px;
    display: flex;
    padding: 2px 0 0 63px;
    color: #ddd;
    letter-spacing: 0;
    font-size: 10px;
    background:
        linear-gradient(#ddd, #ddd) 71px 16px / 1px 5px no-repeat,
        linear-gradient(#ddd, #ddd) 164px 16px / 1px 5px no-repeat,
        linear-gradient(#ddd, #ddd) 257px 16px / 1px 5px no-repeat,
        linear-gradient(#ddd, #ddd) 350px 16px / 1px 5px no-repeat;
}

.rl {
    width: 93px;
    flex: none;
}

.rl-long {
    margin-left: -6px;
    width: 98px;
}

.playhead {
    position: absolute;
    left: 204px;
    top: 4px;
    width: 12px;
    height: 15px;
}

.tl-cols {
    height: 18px;
    display: flex;
    background: #5a5a5a;
    border-top: 1px solid #111;
    border-bottom: 1px solid #111;
}

.col-left {
    width: 859px;
    flex: none;
    display: flex;
    align-items: center;
    padding-left: 594px;
    gap: 2px;
    border-right: 1px solid #3a3a3a;
}

.cc {
    width: 13px;
    height: 13px;
}

.cc-fx {
    width: 14px;
    text-align: center;
    font-family: "Liberation Serif", serif;
    font-stretch: normal;
    font-style: italic;
    font-size: 14px;
    color: #ccc;
}

.parent {
    margin-left: 9px;
    padding-left: 5px;
    width: 118px;
    border-left: 1px solid #3a3a3a;
    border-right: 1px solid #3a3a3a;
    font-size: 10px;
    line-height: 11px;
    color: #ccc;
}

.col-right {
    flex: 1;
    background: #888;
}

.tl-rows {
    position: relative;
    flex: 1;
    min-height: 0;
}

.row {
    height: 17px;
    display: flex;
    border-bottom: 1px solid #474747;
}

.row-reset {
    height: 11px;
    overflow: hidden;
}

.row-reset .row-left {
    line-height: 6px;
}

.row-left {
    width: 859px;
    flex: none;
    padding-left: 594px;
    line-height: 18px;
    letter-spacing: 0;
    background: #5a5a5a;
    border-right: 1px solid #3e3e3e;
    white-space: nowrap;
}

.row-right {
    flex: 1;
    background: #666;
    position: relative;
    padding-left: 207px;
}

.row u {
    text-decoration: underline dotted;
    text-underline-offset: 2px;
}

.amber {
    color: #c89a30;
}

.red {
    color: #ee5050;
}

.beam {
    position: relative;
    z-index: 2;
    width: 7px;
    height: 11px;
    margin-top: 2px;
    border-top: 1px solid #fff;
    border-bottom: 1px solid #fff;
    background: linear-gradient(#fff, #fff) 2px 0 / 1px 100% no-repeat;
}

.row-reset .beam {
    margin-top: -2px;
}

.row-expr {
    height: 90px;
}

.expr-icons {
    display: flex;
    align-items: flex-start;
    padding: 2px 0 0 610px;
    gap: 3px;
}

.eq-btn {
    width: 14px;
    height: 14px;
    background:
        linear-gradient(#ccc, #ccc) 2px 3px / 8px 2px no-repeat,
        linear-gradient(#ccc, #ccc) 2px 8px / 8px 2px no-repeat,
        #5e5e5e;
    border: 1px solid #888;
    border-radius: 2px;
}

.ex-ic {
    width: 14px;
    height: 14px;
}

.expr-text {
    padding: 1px 0 0 3px;
    font-family: "Liberation Sans", sans-serif;
    font-stretch: normal;
    font-size: 12px;
    line-height: 13px;
    letter-spacing: -0.4px;
    word-spacing: -1px;
    color: #eee;
}

.row-last {
    height: 16px;
    border-bottom: 0;
    border-top: 1px solid #444;
}

.last-left {
    display: flex;
    align-items: center;
    padding-left: 668px;
    gap: 1px;
}

.sw {
    width: 14px;
    height: 14px;
    background: #555;
    border: 1px solid #444;
}

.spiral {
    margin-left: 16px;
}

.none-sel {
    width: 86px;
    height: 14px;
    margin-left: 6px;
}

.last-right {
    background: #8b3838;
}

.time-col {
    position: absolute;
    left: 1070px;
    top: 0;
    width: 46px;
    height: 220px;
    background: rgba(255, 255, 255, 0.16);
}

.green-bar {
    position: absolute;
    left: 1070px;
    top: -3px;
    width: 46px;
    height: 3px;
    background: #18b020;
}

.time-line {
    position: absolute;
    left: 1069px;
    top: -18px;
    bottom: 0;
    width: 1px;
    background: #e81010;
}

.guide {
    position: absolute;
    left: 50px;
    top: 563px;
    width: 577px;
    height: 1px;
    background: #000;
}
```
